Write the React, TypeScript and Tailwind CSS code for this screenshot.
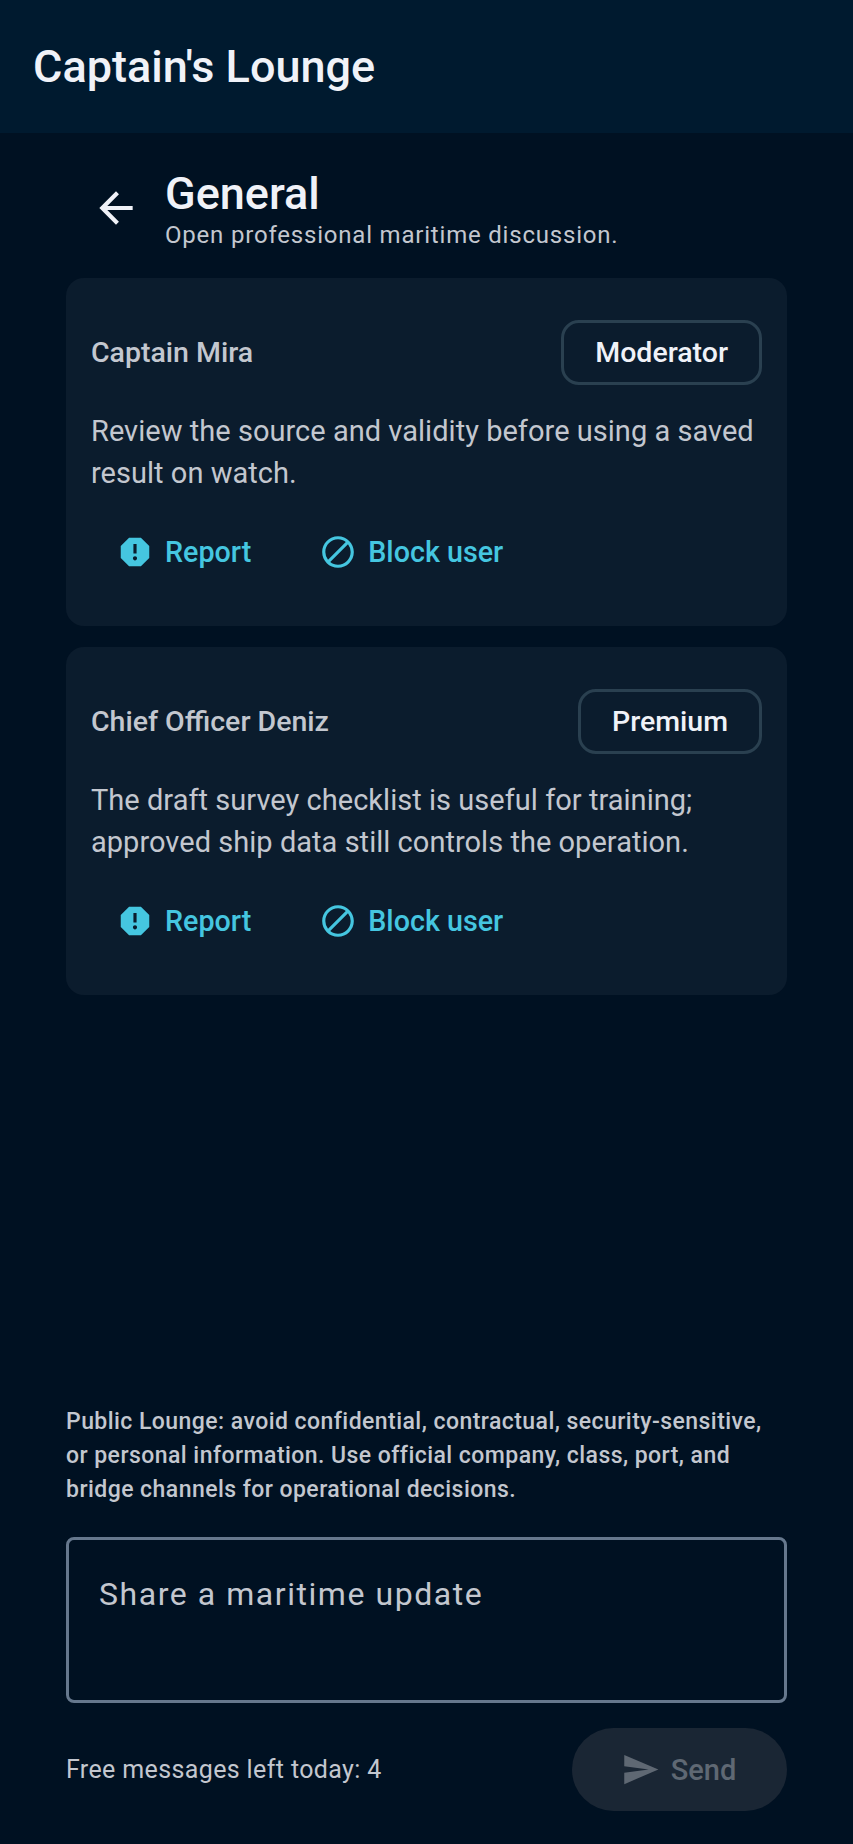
import React from "react";
import { MdArrowBack, MdBlock, MdReport, MdSend } from "react-icons/md";

type Post = {
  author: string;
  role: string;
  body: string;
};

const posts: Post[] = [
  {
    author: "Captain Mira",
    role: "Moderator",
    body: "Review the source and validity before using a saved result on watch.",
  },
  {
    author: "Chief Officer Deniz",
    role: "Premium",
    body: "The draft survey checklist is useful for training; approved ship data still controls the operation.",
  },
];

const PostCard: React.FC<{ post: Post }> = ({ post }) => {
  return (
    <div className="h-[348px] rounded-[18px] bg-[#0b1c2d] px-[25px] pt-[42px]">
      <div className="flex items-center justify-between">
        <span className="text-[28.5px] font-medium leading-[36px] text-[#c3c7cf]">
          {post.author}
        </span>
        <span className="flex h-[65px] items-center rounded-[18px] border-[3px] border-[#2a4050] px-[31px] pt-[1px] text-[28.5px] font-medium text-[#f0f2f8]">
          {post.role}
        </span>
      </div>
      <p className="mt-[25px] text-[29px] leading-[42px] tracking-[0.03px] text-[#c3c7cf]">
        {post.body}
      </p>
      <div className="mt-[37px] flex items-center text-[28.7px] font-medium leading-[42px] text-[#45c6e0]">
        <div className="ml-[25px] flex items-center gap-[11px]">
          <MdReport size={38} />
          <span>Report</span>
        </div>
        <div className="ml-[68px] flex items-center gap-[11px]">
          <MdBlock size={38} />
          <span>Block user</span>
        </div>
      </div>
    </div>
  );
};

export default function App() {
  return (
    <div className="flex h-screen flex-col bg-[#001122] font-['Roboto',sans-serif]">
      <header className="flex h-[133px] shrink-0 items-center bg-[#001a2f] px-[33px]">
        <h1 className="text-[45px] font-medium text-[#f0f2f8]">Captain's Lounge</h1>
      </header>

      <main className="flex flex-1 flex-col px-[66px]">
        <div className="flex items-center pt-[36px]">
          <MdArrowBack size={50} className="mb-[4px] ml-[25px] text-[#f0f2f8]" />
          <div className="ml-[24px]">
            <h2 className="text-[45px] font-medium leading-[50px] text-[#f0f2f8]">General</h2>
            <p className="text-[24px] leading-[32px] tracking-[0.8px] text-[#c3c7cf]">
              Open professional maritime discussion.
            </p>
          </div>
        </div>

        <div className="mt-[27px] flex flex-col gap-[21px]">
          {posts.map((post) => (
            <PostCard key={post.author} post={post} />
          ))}
        </div>

        <div className="mt-auto pb-[33px]">
          <p className="text-[23px] font-medium leading-[34px] tracking-[0.45px] text-[#c3c7cf]">
            Public Lounge: avoid confidential, contractual, security-sensitive, or personal information. Use official company, class, port, and bridge channels for operational decisions.
          </p>
          <div className="mt-[30px] h-[166px] rounded-[8px] border-[3px] border-[#66788d] px-[30px] pt-[33px] text-[32px] leading-[42px] tracking-[1.55px] text-[#c3c7cf]">
            Share a maritime update
          </div>
          <div className="mt-[25px] flex items-center justify-between">
            <span className="text-[25px] tracking-[0.37px] text-[#c3c7cf]">Free messages left today: 4</span>
            <button className="flex h-[83px] w-[215px] items-center justify-center gap-[11px] rounded-full bg-[#1a2634] pr-[2px] text-[29px] font-medium text-[#5f6873]">
              <MdSend size={39} />
              <span className="pt-[2px]">Send</span>
            </button>
          </div>
        </div>
      </main>
    </div>
  );
}
